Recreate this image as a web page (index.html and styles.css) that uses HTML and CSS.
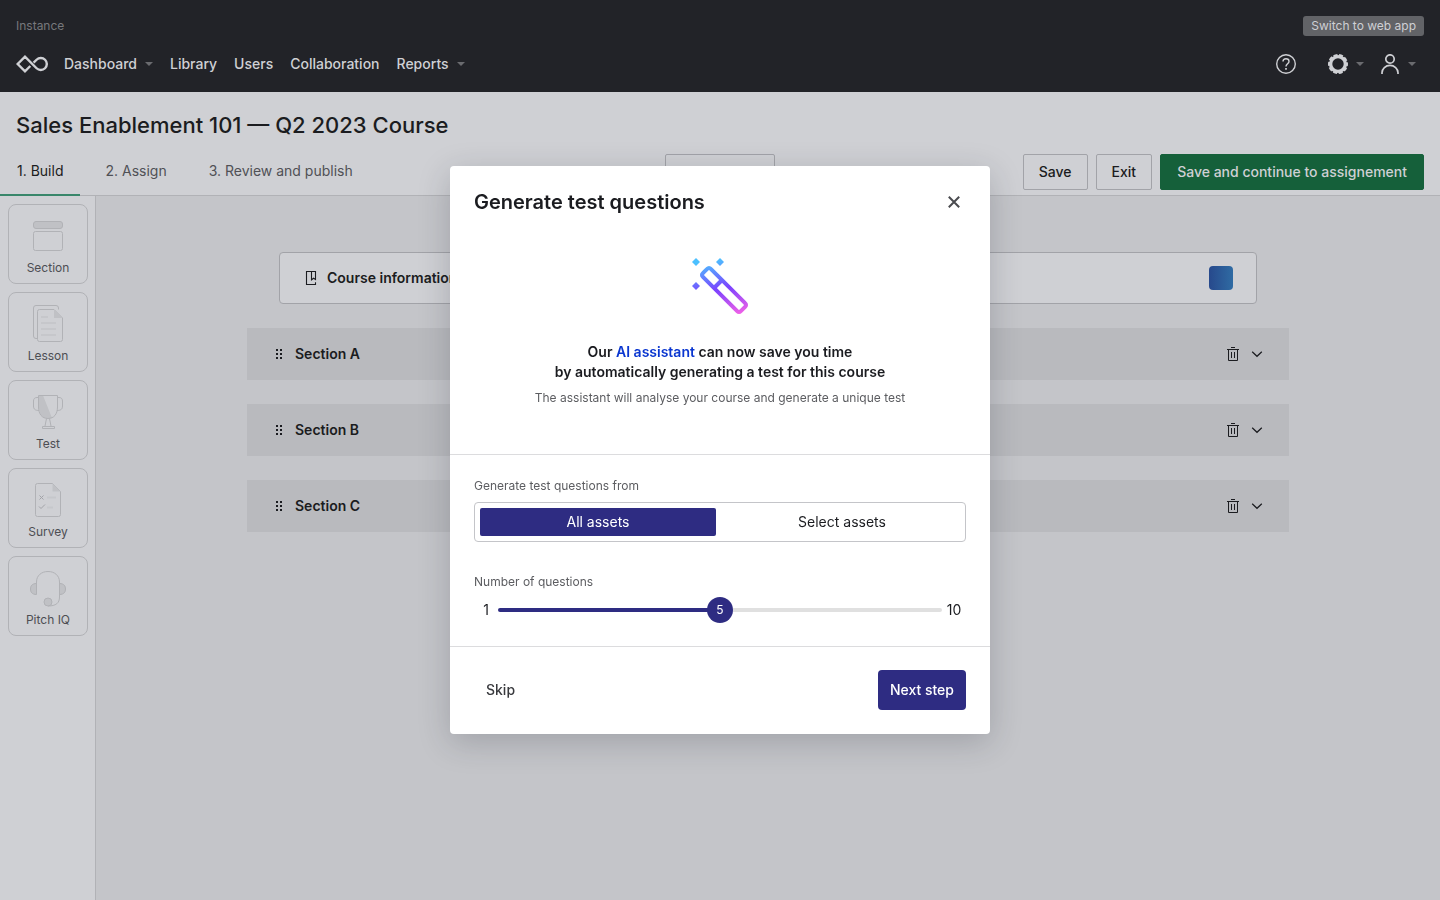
FILE: index.html
```html
<!DOCTYPE html>
<html lang="en">
<head>
<meta charset="utf-8">
<meta name="viewport" content="width=device-width, initial-scale=1">
<title>Sales Enablement 101 — Q2 2023 Course</title>
<link rel="stylesheet" href="styles.css">
</head>
<body>
<div class="page">
  <header class="topbar">
    <div class="topbar-row">
      <span class="instance">Instance</span>
      <button class="switch" type="button">Switch to web app</button>
    </div>
    <div class="topbar-row">
      <nav class="nav">
        <a class="logo" href="#" aria-label="Home">
          <svg width="32" height="20" viewBox="0 0 32 20" fill="none" stroke="currentColor" stroke-width="2.4"><path d="M17.600 8.700L20.560 5.760A6 6 0 1 1 20.560 14.240L9 2.700L1.700 10L9 17.300L14.300 12"/></svg>
        </a>
        <a class="nav-link has-caret" href="#">Dashboard</a>
        <a class="nav-link" href="#">Library</a>
        <a class="nav-link" href="#">Users</a>
        <a class="nav-link" href="#">Collaboration</a>
        <a class="nav-link has-caret" href="#">Reports</a>
      </nav>
      <div class="tools">
        <button class="tool" type="button" aria-label="Help">
          <svg width="20" height="20" viewBox="0 0 20 20" fill="none" stroke="currentColor" stroke-width="1.4"><circle cx="10" cy="10" r="9.3"/><path d="M7 7.6C7 5.8 8.2 4.8 10 4.8s3 1.1 3 2.6c0 2.2-3 2.4-3 5"/><path d="M10 14v1.7" stroke-width="1.7"/></svg>
        </button>
        <button class="tool has-caret" type="button" aria-label="Settings">
          <svg width="20" height="20" viewBox="0 0 20 20" fill="none" stroke="currentColor"><circle cx="10" cy="10" r="7.400" stroke-width="3.400"/><circle cx="10" cy="10" r="9" stroke-width="2" stroke-dasharray="4 1.655" stroke-dashoffset="2"/></svg>
        </button>
        <button class="tool has-caret" type="button" aria-label="Account">
          <svg width="20" height="20" viewBox="0 0 20 20" fill="none" stroke="currentColor" stroke-width="1.7"><circle cx="10" cy="5" r="4.2"/><path d="M2 20v-1.2a8 7.4 0 0 1 16 0V20"/></svg>
        </button>
      </div>
    </div>
  </header>

  <div class="course-head">
    <h1 class="course-title">Sales Enablement 101 — Q2 2023 Course</h1>
    <div class="course-bar">
      <nav class="tabs">
        <a class="tab tab-active" href="#">1. Build</a>
        <a class="tab" href="#">2. Assign</a>
        <a class="tab" href="#">3. Review and publish</a>
      </nav>
      <button class="btn btn-preview" type="button" aria-label="Preview"></button>
      <div class="actions">
        <button class="btn" type="button">Save</button>
        <button class="btn" type="button">Exit</button>
        <button class="btn btn-green" type="button">Save and continue to assignement</button>
      </div>
    </div>
  </div>

  <div class="workspace">
    <aside class="palette">
      <button class="block" type="button">
        <svg width="40" height="40" viewBox="0 0 40 40" fill="none" stroke="currentColor"><rect x="5.500" y="5.500" width="29" height="7" rx="2.500" class="shade"/><rect x="5.500" y="15.500" width="29" height="19" rx="2"/></svg>
        Section
      </button>
      <button class="block" type="button">
        <svg width="40" height="40" viewBox="0 0 40 40" fill="none" stroke="currentColor"><path d="M9 34.500H8A2.500 2.500 0 0 1 5.500 32V4A2.500 2.500 0 0 1 8 1.500H28A2.500 2.500 0 0 1 30.500 4V5.500"/><path d="M11.500 5.500H26L34.500 14V35.500A2 2 0 0 1 32.500 37.500H11.500A2 2 0 0 1 9.500 35.500V7.500A2 2 0 0 1 11.500 5.500Z"/><path class="shade" stroke="none" d="M26 5.500V14H34.500Z"/><path class="faint" stroke-width="2" d="M13 13h7M13 19h15M13 25h15M13 31h15"/></svg>
        Lesson
      </button>
      <button class="block" type="button">
        <svg width="40" height="40" viewBox="0 0 40 40" fill="none" stroke="currentColor"><path class="shade" stroke="none" d="M11 3.500H15L24 26H16Q11 22 11 16Z"/><path d="M10.500 3.500H29.500V15C29.500 22 26 26.500 20 26.500S10.500 22 10.500 15Z"/><path d="M10.500 5.500H9C6.500 5.500 5.500 7 5.500 9V14C5.500 17.500 7.500 18.500 11 18.500M29.500 5.500H31C33.500 5.500 34.500 7 34.500 9V14C34.500 17.500 32.500 18.500 29 18.500"/><path d="M18.500 26.500L17 34M21.500 26.500L23 34M14.500 34.500H26.500V36.500H14.500Z"/></svg>
        Test
      </button>
      <button class="block" type="button">
        <svg width="40" height="40" viewBox="0 0 40 40" fill="none" stroke="currentColor"><path d="M9.500 3.500H24.500L32.500 11.500V34.500A2 2 0 0 1 30.500 36.500H9.500A2 2 0 0 1 7.500 34.500V5.500A2 2 0 0 1 9.500 3.500Z"/><path class="shade" stroke="none" d="M24.500 3.500V11.500H32.500Z"/><path class="mark" d="M11.500 15.500l4 4M15.500 15.500l-4 4M11 26.500l2 2 4-4"/><path class="faint" stroke-width="2" d="M19 17.500h9M19 27.500h6"/></svg>
        Survey
      </button>
      <button class="block" type="button">
        <svg width="40" height="40" viewBox="0 0 40 40" fill="none" stroke="currentColor"><path class="shade" d="M8.500 15.500C4 15.500 2.500 18 2.500 21S4 26.500 8.500 26.500ZM31.500 15.500C36 15.500 37.500 18 37.500 21S36 26.500 31.500 26.500Z"/><path d="M8.500 26V14C8.500 7.500 13.500 3.500 20 3.500S31.500 7.500 31.500 14V29C31.500 35 28 38 20 38"/><circle class="shade" cx="20" cy="34" r="4"/></svg>
        Pitch IQ
      </button>
    </aside>

    <main class="canvas">
      <div class="outline">
        <section class="info-card">
          <svg width="16" height="16" viewBox="0 0 16 16" fill="none" stroke="currentColor" stroke-width="1.100"><path d="M12.500 12.200V14.500H3.500V1.500H12.500V9.500L10.600 8.200L8.500 9.800V1.500"/></svg>
          <h2 class="row-title">Course information</h2>
          <span class="thumb"></span>
        </section>
        <section class="section-row">
          <svg width="16" height="16" viewBox="0 0 16 16" fill="currentColor"><path d="M5 3h2v2H5zM9 3h2v2H9zM5 7h2v2H5zM9 7h2v2H9zM5 11h2v2H5zM9 11h2v2H9z"/></svg>
          <h2 class="row-title">Section A</h2>
          <button class="icon-btn" type="button" aria-label="Delete Section A"><svg width="16" height="16" viewBox="0 0 16 16" fill="none" stroke="currentColor"><path d="M6 1.500h4M2 3.500h12M3.500 4v10.500h9V4M6.500 6v6M9.500 6v6"/></svg></button>
          <button class="icon-btn" type="button" aria-label="Expand Section A"><svg width="16" height="16" viewBox="0 0 16 16" fill="none" stroke="currentColor" stroke-width="1.200"><path d="M3.200 5.700L8 10.300l4.800-4.600"/></svg></button>
        </section>
        <section class="section-row">
          <svg width="16" height="16" viewBox="0 0 16 16" fill="currentColor"><path d="M5 3h2v2H5zM9 3h2v2H9zM5 7h2v2H5zM9 7h2v2H9zM5 11h2v2H5zM9 11h2v2H9z"/></svg>
          <h2 class="row-title">Section B</h2>
          <button class="icon-btn" type="button" aria-label="Delete Section B"><svg width="16" height="16" viewBox="0 0 16 16" fill="none" stroke="currentColor"><path d="M6 1.500h4M2 3.500h12M3.500 4v10.500h9V4M6.500 6v6M9.500 6v6"/></svg></button>
          <button class="icon-btn" type="button" aria-label="Expand Section B"><svg width="16" height="16" viewBox="0 0 16 16" fill="none" stroke="currentColor" stroke-width="1.200"><path d="M3.200 5.700L8 10.300l4.800-4.600"/></svg></button>
        </section>
        <section class="section-row">
          <svg width="16" height="16" viewBox="0 0 16 16" fill="currentColor"><path d="M5 3h2v2H5zM9 3h2v2H9zM5 7h2v2H5zM9 7h2v2H9zM5 11h2v2H5zM9 11h2v2H9z"/></svg>
          <h2 class="row-title">Section C</h2>
          <button class="icon-btn" type="button" aria-label="Delete Section C"><svg width="16" height="16" viewBox="0 0 16 16" fill="none" stroke="currentColor"><path d="M6 1.500h4M2 3.500h12M3.500 4v10.500h9V4M6.500 6v6M9.500 6v6"/></svg></button>
          <button class="icon-btn" type="button" aria-label="Expand Section C"><svg width="16" height="16" viewBox="0 0 16 16" fill="none" stroke="currentColor" stroke-width="1.200"><path d="M3.200 5.700L8 10.300l4.800-4.600"/></svg></button>
        </section>
      </div>
    </main>
  </div>
</div>

<div class="overlay">
  <form class="modal" role="dialog" aria-modal="true" aria-labelledby="modal-title">
    <header class="modal-head">
      <h2 class="modal-title" id="modal-title">Generate test questions</h2>
      <button class="close" type="button" aria-label="Close">
        <svg width="24" height="24" viewBox="0 0 24 24" fill="none" stroke="currentColor" stroke-width="2"><path d="M6.800 6.800l10.400 10.400M17.200 6.800L6.800 17.200"/></svg>
      </button>
    </header>
    <div class="intro">
      <svg width="64" height="64" viewBox="0 0 64 64" fill="none">
        <defs><linearGradient id="wand" gradientUnits="userSpaceOnUse" x1="26" y1="6" x2="40" y2="64"><stop offset="0" stop-color="#4cc0ff"/><stop offset=".5" stop-color="#7b42ff"/><stop offset="1" stop-color="#f562e6"/></linearGradient></defs>
        <g stroke="url(#wand)" stroke-width="4" stroke-linejoin="round"><path d="M14.900 19.200L19.200 14.900Q21 13 22.800 14.900L57.100 49.200Q59 51 57.100 52.800L52.800 57.100Q51 59 49.200 57.100L14.900 22.800Q13 21 14.900 19.200Z"/><path d="M26 34L34 26"/></g>
        <path fill="url(#wand)" d="M8 4l4 4-4 4-4-4zM32 4l4 4-4 4-4-4zM8 28l4 4-4 4-4-4z"/>
      </svg>
      <p class="lead">Our <a class="lead-link" href="#">AI assistant</a> can now save you time<br>by automatically generating a test for this course</p>
      <p class="note">The assistant will analyse your course and generate a unique test</p>
    </div>
    <div class="settings">
      <fieldset class="field">
        <legend class="label">Generate test questions from</legend>
        <div class="segmented">
          <label class="segment"><input type="radio" name="source" checked>All assets</label>
          <label class="segment"><input type="radio" name="source">Select assets</label>
        </div>
      </fieldset>
      <div class="field">
        <label class="label" for="count">Number of questions</label>
        <div class="slider-row">
          <span class="bound">1</span>
          <div class="slider">
            <input class="range" id="count" type="range" min="0" max="10" value="5">
            <output class="slider-value" for="count">5</output>
          </div>
          <span class="bound">10</span>
        </div>
      </div>
    </div>
    <footer class="modal-foot">
      <button class="modal-btn" type="button">Skip</button>
      <button class="modal-btn modal-btn-primary" type="submit">Next step</button>
    </footer>
  </form>
</div>
</body>
</html>
```
FILE: styles.css
```css
:root {
  --ink: #1b1c20;
  --bar: #222328;
  --bar-text: #cfd0d4;
  --surface: #cfd0d4;
  --canvas: #c4c5c9;
  --line: #b1b2b6;
  --border: #a2a3a8;
  --indigo: #2e2c82;
}

* { box-sizing: border-box; }

body {
  margin: 0;
  font: 14px/20px Inter, "Liberation Sans", sans-serif;
  color: var(--ink);
  background: var(--canvas);
}

h1, h2, p { margin: 0; }
a { color: inherit; text-decoration: none; }
svg { display: block; flex: none; }

button {
  margin: 0;
  padding: 0;
  border: 0;
  background: none;
  color: inherit;
  font: inherit;
  cursor: pointer;
}

.page {
  display: flex;
  flex-direction: column;
  min-height: 100vh;
}

/* Top bar */
.topbar {
  display: flex;
  flex-direction: column;
  gap: 8px;
  padding: 16px 16px 8px;
  background: var(--bar);
  color: var(--bar-text);
}

.topbar-row {
  display: flex;
  align-items: center;
  justify-content: space-between;
}

.instance { font-size: 12px; color: #77787c; }

.switch {
  height: 20px;
  padding: 0 8px;
  border-radius: 3px;
  background: #626367;
  font-size: 12px;
}

.nav {
  display: flex;
  align-items: center;
  gap: 17px;
  height: 40px;
  font-weight: 500;
}

.logo { margin-right: -1px; }

.has-caret { display: flex; align-items: center; gap: 8px; }

.has-caret::after {
  content: "";
  border: 4px solid transparent;
  border-top-color: #6a6b6f;
  border-bottom: 0;
}

.tools { display: flex; align-items: center; gap: 16px; padding-right: 8px; }
.tool:first-child { margin-right: 16px; }

/* Course heading */
.course-head {
  display: flex;
  flex-direction: column;
  gap: 13px;
  padding-top: 17px;
  border-bottom: 1px solid var(--line);
  background: var(--surface);
}

.course-title {
  padding: 0 16px;
  font-size: 22px;
  line-height: 32px;
  font-weight: 500;
}

.course-bar {
  display: grid;
  grid-template-columns: 1fr auto 1fr;
  align-items: start;
  height: 41px;
}

.tabs { display: flex; gap: 8px; }

.tab {
  height: 42px;
  padding: 7px 17px 0;
  border-bottom: 2px solid transparent;
  color: #505156;
}

.tab-active { border-color: #38866a; color: var(--ink); }

.actions {
  display: flex;
  justify-content: flex-end;
  gap: 8px;
  padding-right: 16px;
}

.btn {
  height: 36px;
  padding: 0 15px;
  border: 1px solid var(--border);
  border-radius: 2px;
  font-weight: 500;
}

.btn-preview { width: 110px; }

.btn-green {
  padding: 0 16px;
  border-color: #15603a;
  background: #15603a;
  color: #cfd0d4;
}

/* Workspace */
.workspace { display: flex; flex: 1; }

.palette {
  display: flex;
  flex: none;
  flex-direction: column;
  gap: 8px;
  width: 96px;
  padding: 8px 7px 8px 8px;
  border-right: 1px solid var(--line);
  background: var(--surface);
}

.block {
  display: flex;
  flex-direction: column;
  align-items: center;
  gap: 3px;
  height: 80px;
  padding-top: 11px;
  border: 1px solid var(--line);
  border-radius: 8px;
  color: #4d4e53;
  font-size: 12px;
  line-height: 18px;
}

.block svg { color: #b1b2b6; }
.block .shade { fill: #c0c1c5; }
.block .faint { stroke: #c6c7cb; }
.block .mark { stroke: #a2a3a8; }

.canvas { flex: 1; padding: 56px 32px; }

.outline {
  display: flex;
  flex-direction: column;
  gap: 24px;
  max-width: 1042px;
  margin: 0 auto;
}

.info-card, .section-row {
  display: flex;
  align-items: center;
  gap: 8px;
  height: 52px;
  padding: 0 24px;
}

.info-card {
  margin: 0 32px;
  padding: 0 23px;
  border: 1px solid var(--border);
  border-radius: 4px;
  background: var(--surface);
}

.section-row { background: #b9babe; }

.row-title { flex: 1; font-size: 14px; font-weight: 600; }

.thumb {
  width: 24px;
  height: 24px;
  border-radius: 4px;
  background: linear-gradient(90deg, #27498c, #2f6ba3);
}

/* Dialog */
.overlay {
  position: fixed;
  inset: 0;
  display: flex;
  align-items: center;
  justify-content: center;
}

.modal {
  width: 540px;
  max-width: 100%;
  border-radius: 4px;
  background: #fff;
  box-shadow: 0 8px 32px rgba(34, 35, 50, 0.22);
}

.modal-head {
  display: flex;
  align-items: center;
  justify-content: space-between;
  padding: 24px 24px 0;
}

.modal-title { font-size: 20px; line-height: 24px; font-weight: 600; }
.close { color: #4a4b4f; }

.intro {
  display: flex;
  flex-direction: column;
  align-items: center;
  padding: 40px 24px 48px;
  border-bottom: 1px solid #dcdcde;
  text-align: center;
}

.lead { margin-top: 24px; font-weight: 600; }
.lead-link { color: #0a36d0; }
.note { margin-top: 8px; color: #5c5d61; font-size: 12px; line-height: 16px; }

.settings {
  display: flex;
  flex-direction: column;
  gap: 32px;
  padding: 23px 24px;
  border-bottom: 1px solid #dcdcde;
}

.field { margin: 0; padding: 0; border: 0; }

.label {
  display: block;
  padding: 0;
  color: #5c5d61;
  font-size: 12px;
  line-height: 16px;
}

.segmented {
  display: flex;
  gap: 8px;
  margin-top: 8px;
  padding: 5px;
  border: 1px solid #c4c5c9;
  border-radius: 4px;
}

.segment {
  flex: 1;
  padding: 4px;
  border-radius: 2px;
  text-align: center;
  cursor: pointer;
}

.segment input { position: absolute; opacity: 0; pointer-events: none; }
.segment:has(input:checked) { background: var(--indigo); color: #fff; }

.slider-row { display: flex; align-items: center; margin-top: 7px; }
.bound { width: 24px; text-align: center; }
.slider { position: relative; flex: 1; height: 26px; }

.range {
  display: block;
  width: 100%;
  height: 26px;
  margin: 0;
  appearance: none;
  background: none;
}

.range::-webkit-slider-runnable-track {
  height: 4px;
  border-radius: 2px;
  background: linear-gradient(90deg, var(--indigo) 50%, #e0e0e0 50%);
}

.range::-webkit-slider-thumb {
  appearance: none;
  width: 26px;
  height: 26px;
  margin-top: -11px;
  border-radius: 50%;
  background: var(--indigo);
}

.slider-value {
  position: absolute;
  inset: 0;
  color: #fff;
  font-size: 12px;
  line-height: 26px;
  text-align: center;
  pointer-events: none;
}

.modal-foot {
  display: flex;
  justify-content: space-between;
  padding: 23px 24px 24px;
}

.modal-btn {
  height: 40px;
  padding: 0 12px;
  border-radius: 4px;
  color: #38393d;
  font-weight: 500;
}

.modal-btn-primary { background: var(--indigo); color: #fff; }
```
